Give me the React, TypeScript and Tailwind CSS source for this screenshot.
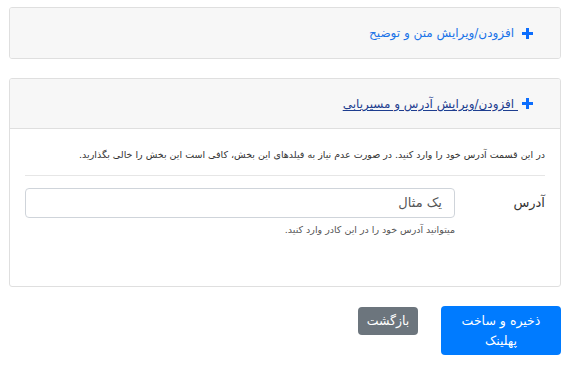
import React from "react";

const Plus = () => (
  <svg width="11" height="11" viewBox="0 0 11 11" className="shrink-0">
    <path d="M4 0h3v4h4v3H7v4H4V7H0V4h4z" fill="#0d6efd" />
  </svg>
);

export default function App() {
  return (
    <div
      dir="rtl"
      className="w-[572px] h-[365px] bg-white pt-[7px] pr-[11px] pl-[9px]"
      style={{ fontFamily: '"DejaVu Sans", Tahoma, sans-serif' }}
    >
      <div className="border border-[#dfdfdf] rounded-[3px] overflow-hidden">
        <div className="h-[50px] bg-[#f7f7f7] flex items-center pr-[27px] gap-[8px] text-[12px] text-[#1a73e8]">
          <Plus />
          <span>افزودن/ویرایش متن و توضیح</span>
        </div>
      </div>

      <div className="mt-[19px] border border-[#dfdfdf] rounded-[3px] overflow-hidden">
        <div className="h-[50px] bg-[#f7f7f7] border-b border-[#dfdfdf] flex items-center pr-[27px] gap-[4px] text-[12px] text-[#1d3d8f]">
          <Plus />
          <span className="underline underline-offset-2">&nbsp;افزودن/ویرایش آدرس و مسیریابی</span>
        </div>
        <div className="px-[15px] pt-[18px] h-[157px]">
          <p className="text-[9.5px] text-[#333] leading-[16px]">
            در این قسمت آدرس خود را وارد کنید. در صورت عدم نیاز به فیلدهای این بخش، کافی است این بخش را خالی بگذارید.
          </p>
          <div className="mt-[12px] border-t border-[#e6e6e6]" />
          <div className="mt-[12px] flex">
            <div className="w-[90px] pt-[5px] text-[13px] text-[#333]">آدرس</div>
            <div className="flex-1">
              <div className="h-[30px] border border-[#cfd4da] rounded-[4px] flex items-center px-[12px] text-[13px] text-[#555]">
                یک مثال
              </div>
              <div className="mt-[5px] text-[9.5px] text-[#555]">
                میتوانید آدرس خود را در این کادر وارد کنید.
              </div>
            </div>
          </div>
        </div>
      </div>

      <div className="mt-[19px] flex items-start gap-[23px]">
        <button className="w-[120px] h-[49px] bg-[#007bff] text-white rounded-[4px] text-[12.5px] leading-[20px] px-[8px]">
          ذخیره و ساخت پهلینک
        </button>
        <button className="mt-[1px] w-[60px] h-[28px] bg-[#6c757d] text-white rounded-[4px] text-[12.5px]">
          بازگشت
        </button>
      </div>
    </div>
  );
}
